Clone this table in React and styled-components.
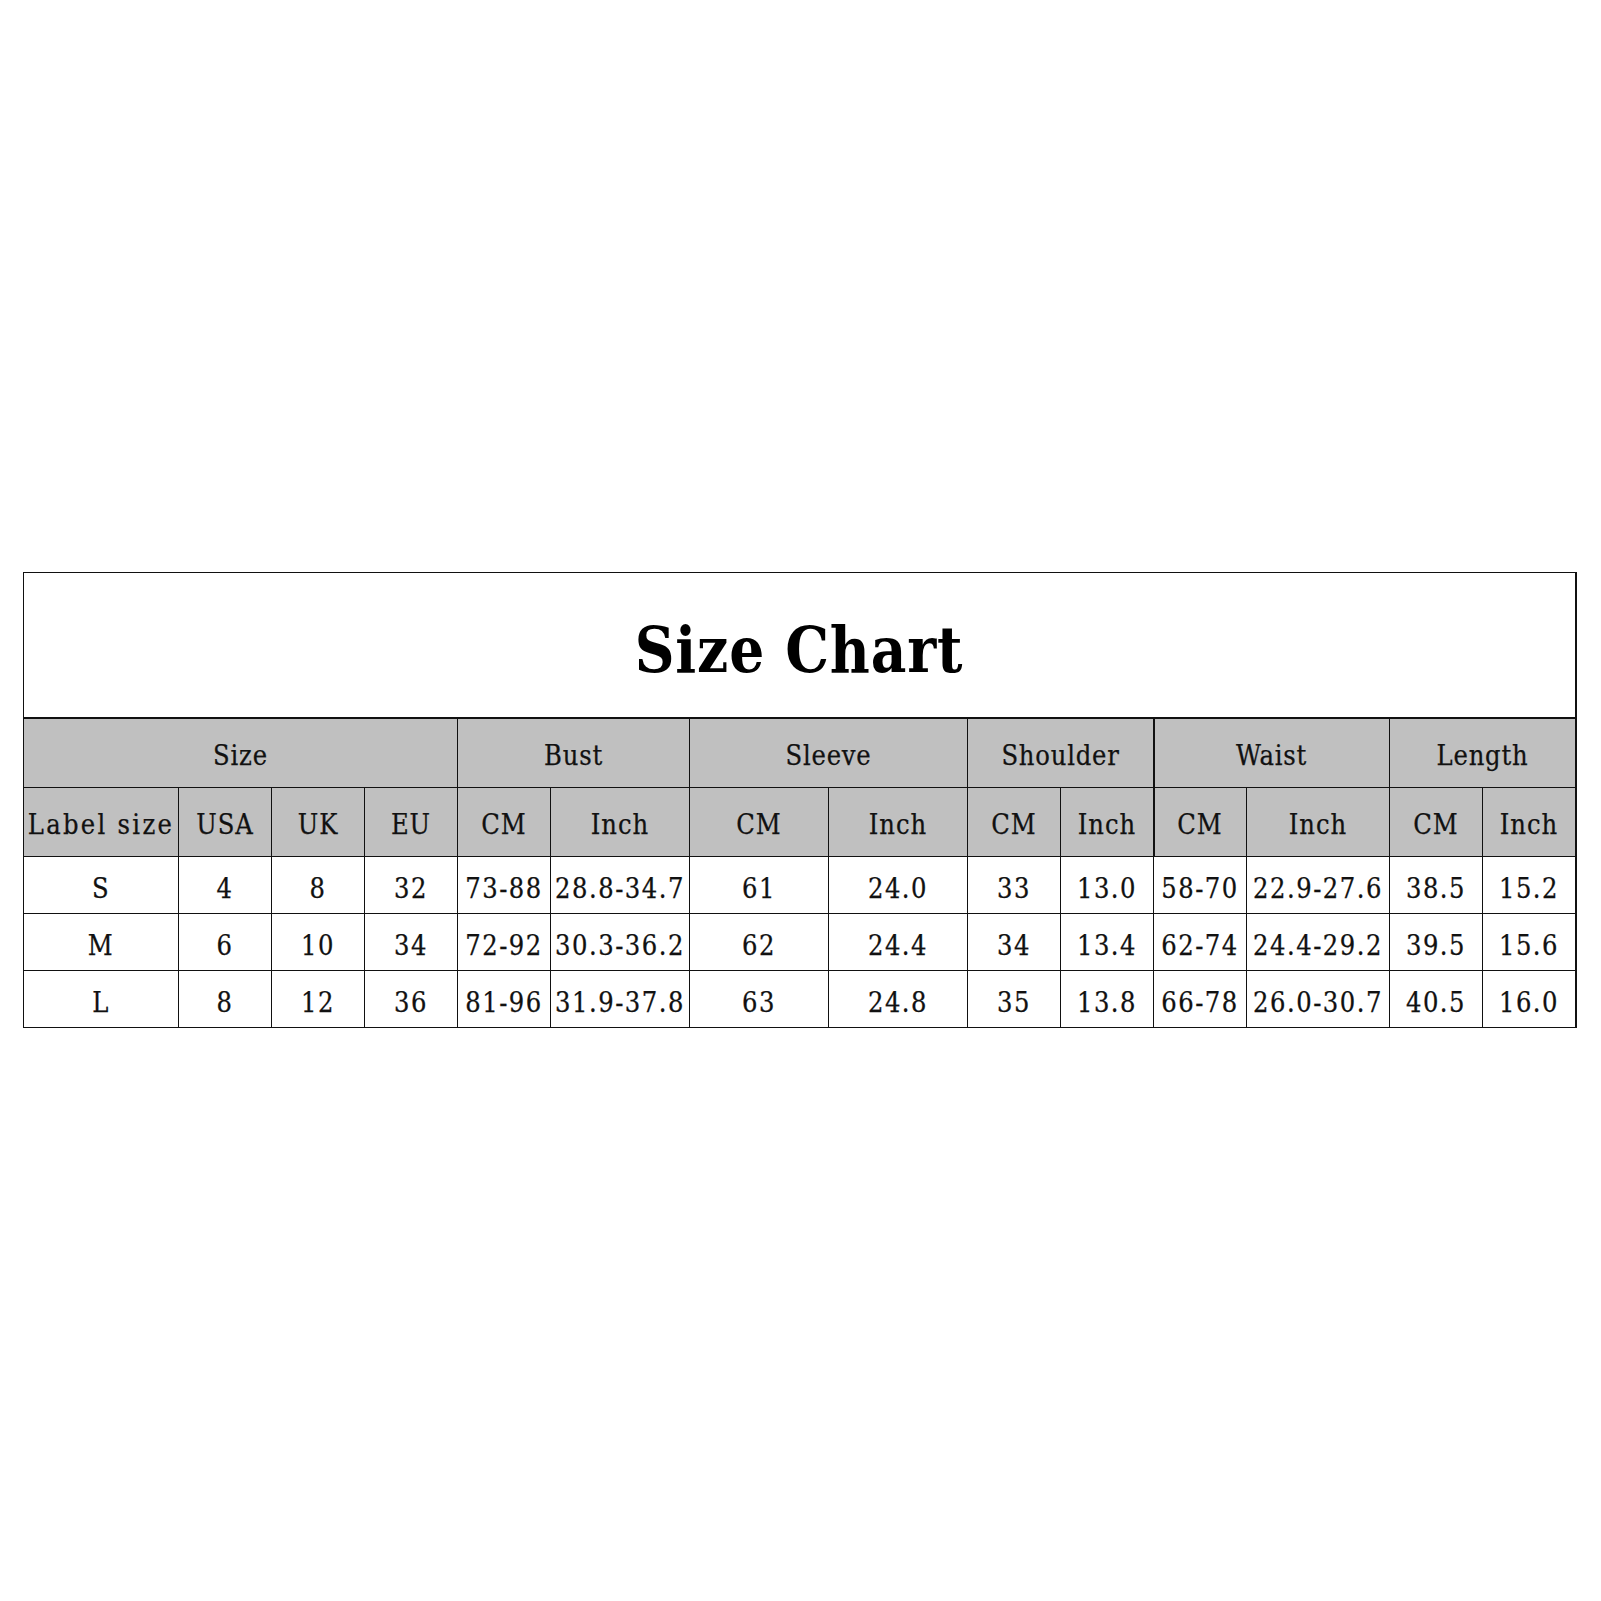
import React from "react";
import styled, { createGlobalStyle } from "styled-components";

const Global = createGlobalStyle`
  html, body { margin: 0; padding: 0; background: #fff; }
  body { font-family: "DejaVu Serif", "Liberation Serif", serif; color: #111; }
`;

const Page = styled.div`
  width: 1601px;
  height: 1601px;
  box-sizing: border-box;
  padding: 572px 0 0 23px;
  background: #fff;
`;

const Chart = styled.div`
  display: grid;
  width: max-content;
  grid-template-columns: 154px 92px 92px 92px 92px 138px 138px 138px 92px 92px 92px 142px 92px 92px;
  grid-template-rows: 145px 68px 68px 56px 56px 56px;
  gap: 1px;
  background: #111;
  border: 1px solid #111;
  border-right-width: 2px;
`;

const TitleCell = styled.div`
  grid-column: 1 / -1;
  background: #fff;
  border-bottom: 1px solid #111;
  display: flex;
  align-items: center;
  justify-content: center;
  overflow: visible;
`;

const Title = styled.h1`
  margin: 0;
  display: inline-block;
  font-family: "DejaVu Serif", "Liberation Serif", serif;
  font-weight: 700;
  font-size: 64px;
  line-height: 1;
  letter-spacing: 1px;
  white-space: nowrap;
  color: #000;
  transform: scaleX(0.86);
  transform-origin: center;
  padding-top: 10px;
`;

const Cell = styled.div`
  grid-column: span ${(p) => p.$span || 1};
  background: ${(p) => (p.$head ? "#c0c0c0" : "#fff")};
  box-shadow: ${(p) => (p.$thickLeft ? "inset 1px 0 0 #111" : "none")};
  display: flex;
  align-items: center;
  justify-content: center;
  overflow: visible;
  min-width: 0;
`;

const Label = styled.span`
  display: inline-block;
  font-family: "DejaVu Serif", "Liberation Serif", serif;
  font-stretch: condensed;
  font-size: 27px;
  line-height: 1;
  letter-spacing: ${(p) => p.$spacing ?? 1.5}px;
  white-space: nowrap;
  color: #111;
  -webkit-text-stroke: 0.25px #111;
  padding-top: ${(p) => (p.$head ? 4 : 6)}px;
`;

const groups = [
  { name: "Size", span: 4 },
  { name: "Bust", span: 2 },
  { name: "Sleeve", span: 2 },
  { name: "Shoulder", span: 2 },
  { name: "Waist", span: 2, thick: true },
  { name: "Length", span: 2 },
];

const subHeads = [
  "Label size", "USA", "UK", "EU",
  "CM", "Inch", "CM", "Inch", "CM", "Inch", "CM", "Inch", "CM", "Inch",
];

const rows = [
  ["S", "4", "8", "32", "73-88", "28.8-34.7", "61", "24.0", "33", "13.0", "58-70", "22.9-27.6", "38.5", "15.2"],
  ["M", "6", "10", "34", "72-92", "30.3-36.2", "62", "24.4", "34", "13.4", "62-74", "24.4-29.2", "39.5", "15.6"],
  ["L", "8", "12", "36", "81-96", "31.9-37.8", "63", "24.8", "35", "13.8", "66-78", "26.0-30.7", "40.5", "16.0"],
];

export default function App() {
  return (
    <>
      <Global />
      <Page>
        <Chart>
          <TitleCell>
            <Title>Size Chart</Title>
          </TitleCell>
          {groups.map((g) => (
            <Cell key={g.name} $head $span={g.span} $thickLeft={g.thick}>
              <Label $head $spacing={0.8}>{g.name}</Label>
            </Cell>
          ))}
          {subHeads.map((h, i) => (
            <Cell key={"h" + i} $head $thickLeft={i === 10}>
              <Label $head $spacing={i === 0 ? 2.3 : 1}>{h}</Label>
            </Cell>
          ))}
          {rows.map((r, ri) =>
            r.map((v, ci) => (
              <Cell key={ri + "-" + ci}>
                <Label>{v}</Label>
              </Cell>
            ))
          )}
        </Chart>
      </Page>
    </>
  );
}
